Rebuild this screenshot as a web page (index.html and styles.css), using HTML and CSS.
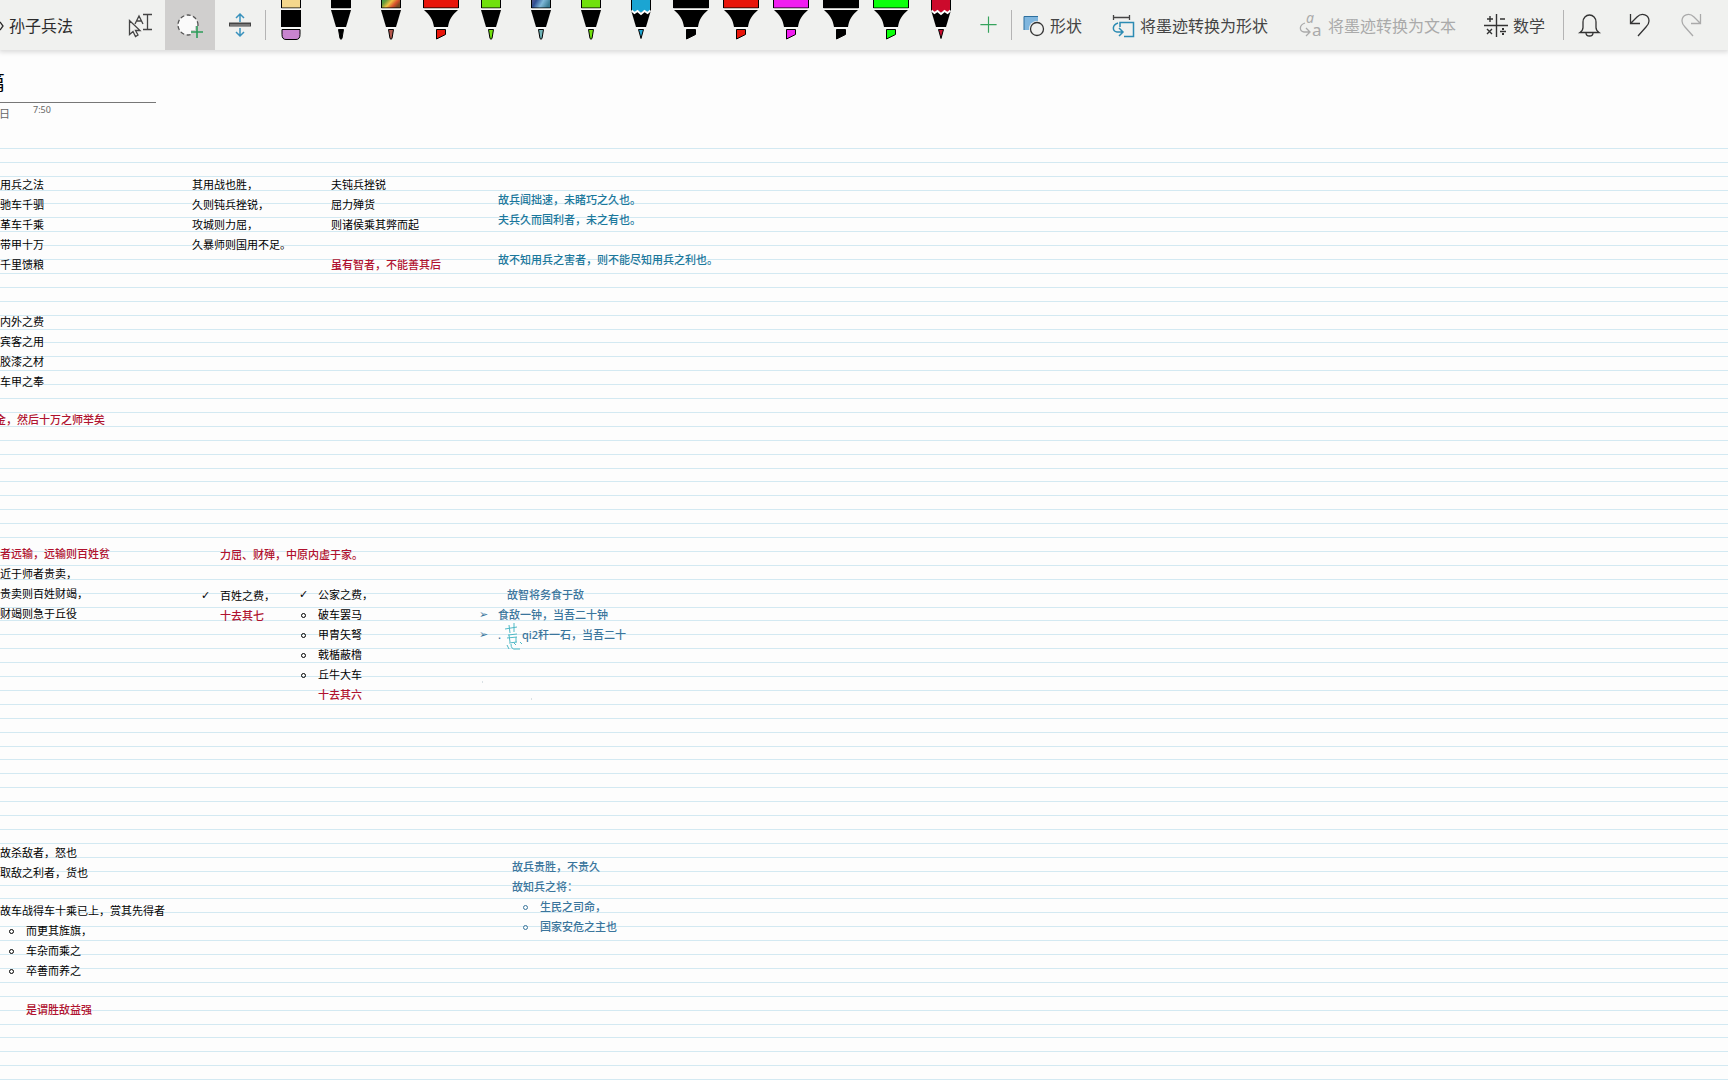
FILE: index.html
```html
<!DOCTYPE html>
<html lang="zh-CN">
<head>
<meta charset="utf-8">
<title>孙子兵法</title>
<link rel="stylesheet" href="styles.css">
</head>
<body>
<svg class="defs" aria-hidden="true">
  <defs>
    <linearGradient id="rainbow" x1="0" y1="0" x2="1" y2="0.5">
      <stop offset="0" stop-color="#1f9a54"/><stop offset=".3" stop-color="#6a9c3c"/><stop offset=".55" stop-color="#f0c040"/><stop offset=".8" stop-color="#d8502c"/><stop offset="1" stop-color="#7a4a20"/>
    </linearGradient>
    <linearGradient id="galaxy" x1="0" y1="0" x2="1" y2="0.3">
      <stop offset="0" stop-color="#6d5a86"/><stop offset=".3" stop-color="#2f4f93"/><stop offset=".65" stop-color="#7fb8d8"/><stop offset="1" stop-color="#3f7f96"/>
    </linearGradient>
    <symbol id="pen" viewBox="0 0 50 50">
      <path class="cap" d="M15.500-2h19V8h-19z"/>
      <path class="gap" d="M15 9h20M20 28h10"/>
      <path d="M15 10h20l-5 17H20z"/>
      <path class="tip" d="M22.500 29.500h5l-1.500 9q-1 1.500-2 0z"/>
    </symbol>
    <symbol id="marker" viewBox="0 0 50 50">
      <path class="cap" d="M7.500-2h35V8h-35z"/>
      <path class="gap" d="M7 9h36M18 28h14"/>
      <path d="M8 10h34c-6 5-9 10-10 17H18C17 20 14 15 8 10z"/>
      <path class="tip" d="M20.500 29.500h9v5l-9 4.500z"/>
    </symbol>
    <symbol id="pencil" viewBox="0 0 50 50">
      <path d="M15 10h20l-5 17H20z"/>
      <path class="cap" d="M15.500-2h19V11l-3 2-3-2-3.500 2-3.500-2-3 2-3-2z"/>
      <path class="zig" d="M15.500 10.500l3 2.500 3-2 3.500 3 3.500-3 3 2 3-2.500"/>
      <path class="gap" d="M20 28h10"/>
      <path class="tip" d="M22.500 29.500h5l-2.500 9z"/>
    </symbol>
  </defs>
</svg>

<header class="toolbar">
  <a class="crumb" href="#"><svg viewBox="0 0 4 24"><path class="line" d="M0 9l3 4-3 4"/></svg>孙子兵法</a>
  <button class="tool" aria-label="选择对象或键入文本">
    <svg viewBox="0 0 50 50"><path class="line" d="M14.500 20.500v14l3.500-3 2.500 5 2.500-1.500-2.500-4.500h4.500zM20 24l4-8 4 8M22 21h4.500M28 14.500h9M32.500 14.500v15M28 29.500h9"/></svg>
  </button>
  <button class="tool selected" aria-label="套索选择">
    <svg viewBox="0 0 50 50"><circle cx="23" cy="25" r="10" fill="#fafafa" stroke="#555" stroke-width="1.300" stroke-dasharray="4 2.500"/><path d="M26 32h12M32 26v12" stroke="#d0cfce" stroke-width="4"/><path d="M26 32h12M32 26v12" stroke="#2c9d5a" stroke-width="1.600"/></svg>
  </button>
  <button class="tool" aria-label="插入空间">
    <svg viewBox="0 0 50 50"><path d="M14 24.500h22" stroke="#444" stroke-width="4"/><path d="M15 25h20" stroke="#aaa"/><path d="M25 22v-8M21 18l4-4 4 4M25 28v8M21 32l4 4 4-4" fill="none" stroke="#3992bd" stroke-width="1.500"/></svg>
  </button>
  <span class="sep"></span>
  <div class="pens">
    <button class="tool" aria-label="橡皮擦"><svg viewBox="0 0 50 50"><path d="M15.500-2h19V8h-19z" fill="#f5d78c" stroke="#000"/><path class="gap" d="M15 9h20M15 28h20"/><path d="M15 10h20v17H15z"/><path d="M16 29.500h18v5q0 5-4 5H20q-4 0-4-5z" fill="#c884cf" stroke="#000"/></svg></button>
    <button class="tool black" aria-label="黑色笔"><svg><use href="#pen"/></svg></button>
    <button class="tool rainbow" aria-label="彩虹笔"><svg><use href="#pen"/></svg></button>
    <button class="tool red" aria-label="红色荧光笔"><svg><use href="#marker"/></svg></button>
    <button class="tool lime" aria-label="绿色笔"><svg><use href="#pen"/></svg></button>
    <button class="tool galaxy" aria-label="银河笔"><svg><use href="#pen"/></svg></button>
    <button class="tool lime" aria-label="绿色笔"><svg><use href="#pen"/></svg></button>
    <button class="tool blue" aria-label="蓝色铅笔"><svg><use href="#pencil"/></svg></button>
    <button class="tool black" aria-label="黑色荧光笔"><svg><use href="#marker"/></svg></button>
    <button class="tool red" aria-label="红色荧光笔"><svg><use href="#marker"/></svg></button>
    <button class="tool magenta" aria-label="品红荧光笔"><svg><use href="#marker"/></svg></button>
    <button class="tool black" aria-label="黑色荧光笔"><svg><use href="#marker"/></svg></button>
    <button class="tool green" aria-label="绿色荧光笔"><svg><use href="#marker"/></svg></button>
    <button class="tool crimson" aria-label="深红铅笔"><svg><use href="#pencil"/></svg></button>
  </div>
  <button class="tool add" aria-label="添加笔"><svg viewBox="0 0 50 50"><path d="M16 24.500h18M25 15.500v18" stroke="#35a35c" stroke-width="1.300"/></svg></button>
  <span class="sep"></span>
  <button class="action shapes"><svg viewBox="0 0 22 24"><path d="M1 3h14v14H1z" fill="#7fb6de"/><path d="M1 17V3.500h14" fill="none" stroke="#2c6f9e"/><circle cx="14" cy="16" r="8" fill="#f0f1ef"/><circle cx="14" cy="16" r="6.500" fill="none" stroke="#333" stroke-width="1.300"/></svg>形状</button>
  <button class="action"><svg viewBox="0 0 24 24"><path d="M2.500 2v5M18.500 2v5M2.500 4.500h16" fill="none" stroke="#444" stroke-width="1.300"/><path d="M9 14V9.500h13.500v14H13M7 10c-6 2-6 8-1 9h5M8 15l4 4-4 4" fill="none" stroke="#2b8bb3" stroke-width="1.500"/></svg>将墨迹转换为形状</button>
  <button class="action totext" disabled><svg viewBox="0 0 24 24"><text x="7" y="10" class="ital">a</text><text x="13" y="23" class="letter">a</text><path d="M6 10c-6 2-6 8-1 9h5M7 15l4 4-4 4" fill="none" stroke="currentColor" stroke-width="1.300"/></svg>将墨迹转换为文本</button>
  <button class="action math"><svg viewBox="0 0 24 24"><path d="M0 12.500h24M12.500 1v23M3 6h6M6 3v6M16 6h5M3 16l5 5M8 16l-5 5M16 18.500h6" fill="none" stroke="#333" stroke-width="1.400"/><path d="M18 15h2v2h-2zM18 20h2v2h-2z" fill="#333"/></svg>数学</button>
  <span class="sep"></span>
  <button class="tool" aria-label="通知"><svg viewBox="0 0 50 50"><path class="line dark" d="M16 32.500h19q-3-2-3-5V22a6.500 7 0 0 0-13 0v5.500q0 3-3 5zM22 33q0 3 3.500 3t3.500-3"/></svg></button>
  <button class="tool" aria-label="撤消"><svg viewBox="0 0 50 50"><path class="line dark" d="M16.500 14v9.500h9.500M17 23l6-6c5-5 12-2 12 4 0 3-1 4-3 6l-8 9"/></svg></button>
  <button class="tool" aria-label="恢复" disabled><svg viewBox="0 0 50 50"><path class="line" d="M36.500 14v9.500H27M36 23l-6-6c-5-5-12-2-12 4 0 3 1 4 3 6l8 9"/></svg></button>
</header>

<main>
  <div class="heading">
    <h1>篇</h1>
    <div class="stamp"><span>日</span><time>7:50</time></div>
  </div>

  <section class="ruled">
    <div class="note n1"><p>用兵之法</p><p>驰车千驷</p><p>革车千乘</p><p>带甲十万</p><p>千里馈粮</p></div>
    <div class="note n2"><p>内外之费</p><p>宾客之用</p><p>胶漆之材</p><p>车甲之奉</p></div>
    <div class="note n3 crimson-text"><p>金，然后十万之师举矣</p></div>
    <div class="note n4"><p>其用战也胜，</p><p>久则钝兵挫锐，</p><p>攻城则力屈，</p><p>久暴师则国用不足。</p></div>
    <div class="note n5"><p>夫钝兵挫锐</p><p>屈力殚货</p><p>则诸侯乘其弊而起</p><p class="blank"></p><p class="crimson-text">虽有智者，不能善其后</p></div>
    <div class="note n6 teal-text"><p>故兵闻拙速，未睹巧之久也。</p><p>夫兵久而国利者，未之有也。</p><p class="blank"></p><p>故不知用兵之害者，则不能尽知用兵之利也。</p></div>

    <div class="note n7"><p class="crimson-text">者远输，远输则百姓贫</p><p>近于师者贵卖，</p><p>贵卖则百姓财竭，</p><p>财竭则急于丘役</p></div>
    <div class="note n8 crimson-text"><p>力屈、财殚，中原内虚于家。</p></div>
    <ul class="note n9"><li class="check">百姓之费，</li><li class="crimson-text">十去其七</li></ul>
    <ul class="note n10"><li class="check">公家之费，</li><li class="ring">破车罢马</li><li class="ring">甲胄矢弩</li><li class="ring">戟楯蔽橹</li><li class="ring">丘牛大车</li><li class="crimson-text">十去其六</li></ul>
    <div class="note n11 steel-text">
      <p class="lead">故智将务食于敌</p>
      <ul><li class="arrow">食敌一钟，当吾二十钟</li><li class="arrow"><span class="inked">.</span>qi2秆一石，当吾二十</li></ul>
    </div>
    <svg class="ink" viewBox="0 0 60 90" aria-hidden="true">
      <path d="M25 9l12-2M29 5l1 8M34 3v9M28 15l9-1M29 15l1 7M27 18l10-1M29 23l8-1M36 17v5M27 25l2 4M31 24q0 6 5 5h4M34 23l2 2M40 22l2 2"/>
      <path class="speck" d="M2 62h1M51 79h1"/>
    </svg>

    <div class="note n12"><p>故杀敌者，怒也</p><p>取敌之利者，货也</p></div>
    <div class="note n13"><p>故车战得车十乘已上，赏其先得者</p>
      <ul><li class="ring">而更其旌旗，</li><li class="ring">车杂而乘之</li><li class="ring">卒善而养之</li></ul></div>
    <div class="note n14 crimson-text"><p>是谓胜敌益强</p></div>
    <div class="note n15 steel-text"><p>故兵贵胜，不贵久</p><p>故知兵之将：</p>
      <ul><li class="ring">生民之司命，</li><li class="ring">国家安危之主也</li></ul></div>
  </section>
</main>
</body>
</html>
```

FILE: styles.css
```css
*, ::before { box-sizing: border-box; }

body {
  margin: 0;
  min-height: 100vh;
  display: flex;
  flex-direction: column;
  background: #fdfdfd;
  color: #000;
  font-family: "Noto Sans", "Noto Sans CJK SC", sans-serif;
  overflow-x: hidden;
}

h1, p, ul { margin: 0; padding: 0; font-weight: 400; }
ul { list-style: none; }
.defs { position: absolute; width: 0; height: 0; }

/* Toolbar */
.toolbar {
  display: flex;
  align-items: center;
  height: 50px;
  background: #f0f1ef;
  box-shadow: 0 1px 5px 1px #d8d8d8;
  color: #333;
}
.toolbar > * { flex: none; }
.crumb {
  display: flex;
  gap: 5px;
  width: 115px;
  color: #2b2b2b;
  font: 16px/24px "Noto Sans CJK SC", sans-serif;
  text-decoration: none;
}
.crumb svg { width: 4px; height: 24px; }
.tool, .action {
  border: 0;
  padding: 0;
  background: none;
  color: #444;
  font: 16px/24px "Noto Sans CJK SC", sans-serif;
}
.tool { width: 50px; height: 50px; }
.tool svg { display: block; width: 50px; height: 50px; }
.tool.selected { background: #d0cfce; }
.tool:disabled, .action:disabled { color: #aaa; }
.sep { width: 1px; height: 30px; background: #b4b4b4; }
.pens { display: flex; }
.add { width: 45px; display: flex; justify-content: center; }
.action {
  display: flex;
  align-items: center;
  gap: 5px;
  margin-left: 13px;
  margin-right: 16px;
}
.action svg { width: 24px; height: 24px; overflow: visible; }
.action.shapes { margin-left: 11px; }
.action.shapes svg { width: 22px; }
.action.totext { margin-left: 15px; }
.action.math { margin-left: 12px; margin-right: 18px; }
.line { fill: none; stroke: currentColor; stroke-width: 1.3px; }
.dark { stroke: #333; }
.letter { font: 17px "Noto Sans", sans-serif; fill: currentColor; }
.ital { font: italic 14px "Noto Sans", sans-serif; fill: currentColor; }

/* Pens */
.cap { fill: var(--ink); stroke: #000; }
.tip { fill: var(--tip, var(--ink)); stroke: #000; }
.gap { fill: none; stroke: #fff; }
.zig { fill: none; stroke: #fff; stroke-width: 2px; }
.black { --ink: #000; }
.rainbow { --ink: url(#rainbow); --tip: #b5574b; }
.galaxy { --ink: url(#galaxy); --tip: #6fb4b8; }
.red { --ink: #e8150a; }
.lime { --ink: #70e00c; }
.blue { --ink: #1ba5d2; }
.magenta { --ink: #f01df0; }
.green { --ink: #0bff0b; }
.crimson { --ink: #cc0a2c; }

/* Page heading */
.heading { height: 98px; padding-top: 14px; }
.heading h1 {
  width: 156px;
  height: 39px;
  border-bottom: 1px solid #777;
  font-size: 20px;
  line-height: 38px;
  text-indent: -15px;
}
.stamp {
  display: flex;
  gap: 24px;
  color: #666;
  font-size: 11px;
  line-height: 22px;
  text-indent: -1px;
}
.stamp time { font-size: 9px; line-height: 14px; }

main { flex: 1; display: flex; flex-direction: column; }

/* Ruled paper: ten rules in each 139px repeat */
.ruled {
  --r: #d3e9f2;
  position: relative;
  flex: 1;
  min-height: 900px;
  background: linear-gradient(
    var(--r) 1px, transparent 1px 14px,
    var(--r) 14px 15px, transparent 15px 28px,
    var(--r) 28px 29px, transparent 29px 42px,
    var(--r) 42px 43px, transparent 43px 55px,
    var(--r) 55px 56px, transparent 56px 69px,
    var(--r) 69px 70px, transparent 70px 83px,
    var(--r) 83px 84px, transparent 84px 97px,
    var(--r) 97px 98px, transparent 98px 111px,
    var(--r) 111px 112px, transparent 112px 125px,
    var(--r) 125px 126px, transparent 126px) 0 0 / 100% 139px;
}

/* Note containers are placed freely on the paper */
.note {
  position: absolute;
  font-size: 11px;
  line-height: 20px;
  white-space: nowrap;
}
.blank { height: 20px; }
.crimson-text { color: #b0122f; font-weight: 500; }
.crimson-text p { font-weight: 500; }
.teal-text { color: #1b789c; }
.steel-text { color: #3a759c; }
.teal-text p, .steel-text p, .steel-text li, p.crimson-text { font-weight: 500; }

.n1 { left: 0; top: 27px; }
.n2 { left: 0; top: 164px; }
.n3 { left: -5px; top: 262px; }
.n4 { left: 192px; top: 27px; }
.n5 { left: 331px; top: 27px; }
.n6 { left: 498px; top: 42px; }
.n7 { left: 0; top: 396px; }
.n8 { left: 220px; top: 397px; }
.n9 { left: 201px; top: 438px; }
.n10 { left: 299px; top: 437px; }
.n11 { left: 479px; top: 437px; }
.n12 { left: 0; top: 695px; }
.n13 { left: 0; top: 753px; }
.n14 { left: 26px; top: 852px; }
.n15 { left: 512px; top: 709px; }

.note li { display: flex; align-items: center; padding-left: 19px; }
.check::before, .arrow::before { width: 19px; margin-left: -19px; }
.check::before { content: "✓"; font-family: "DejaVu Sans", sans-serif; }
.arrow::before { content: "➢"; font-family: "DejaVu Sans", sans-serif; }
.ring::before {
  content: "";
  width: 5px;
  height: 5px;
  margin: 0 12px 0 -17px;
  border: 1px solid currentColor;
  border-radius: 50%;
}
.note.n13 li { padding-left: 26px; }
.note.n15 li { padding-left: 28px; }
.lead { padding-left: 28px; }
.inked { width: 24px; }

.ink {
  position: absolute;
  left: 480px;
  top: 472px;
  width: 60px;
  height: 90px;
  fill: none;
  stroke: #4fb9c6;
  stroke-width: 1px;
}
.ink .speck { stroke: #b5c4cc; }
```
